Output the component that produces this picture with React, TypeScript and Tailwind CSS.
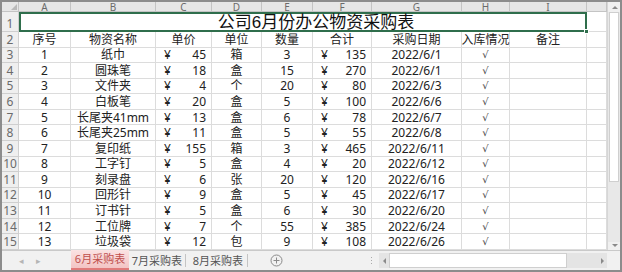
import React from "react";

const colLetters = ["A", "B", "C", "D", "E", "F", "G", "H", "I", ""];

const headers = ["序号", "物资名称", "单价", "单位", "数量", "合计", "采购日期", "入库情况", "备注"];

const rows: [number, string, number, string, number, number, string][] = [
    [1, "纸巾", 45, "箱", 3, 135, "2022/6/1"],
    [2, "圆珠笔", 18, "盒", 15, 270, "2022/6/1"],
    [3, "文件夹", 4, "个", 20, 80, "2022/6/3"],
    [4, "白板笔", 20, "盒", 5, 100, "2022/6/6"],
    [5, "长尾夹41mm", 13, "盒", 6, 78, "2022/6/7"],
    [6, "长尾夹25mm", 11, "盒", 5, 55, "2022/6/8"],
    [7, "复印纸", 155, "箱", 3, 465, "2022/6/11"],
    [8, "工字钉", 5, "盒", 4, 20, "2022/6/12"],
    [9, "刻录盘", 6, "张", 20, 120, "2022/6/16"],
    [10, "回形针", 9, "盒", 5, 45, "2022/6/17"],
    [11, "订书针", 5, "盒", 6, 30, "2022/6/20"],
    [12, "工位牌", 7, "个", 55, 385, "2022/6/24"],
    [13, "垃圾袋", 12, "包", 9, 108, "2022/6/26"],
];

function Cell({ children, className = "" }: { children?: React.ReactNode; className?: string }) {
    return (
        <div className={`flex items-center justify-center border-r border-b border-[#dcdcdc] whitespace-nowrap leading-[13px] ${className}`}>
            {children}
        </div>
    );
}

function RowHead({ n, className = "" }: { n: number; className?: string }) {
    return (
        <div className={`flex items-center justify-center bg-[#efefef] border-r border-b border-[#cfcfcf] text-[12px] leading-[13px] text-[#6b6b6b] ${className}`}>
            {n}
        </div>
    );
}

function Money({ v }: { v: number }) {
    return (
        <Cell className="!justify-between pl-[8px] pr-[5px]">
            <span>¥</span>
            <span>{v}</span>
        </Cell>
    );
}

function Arrow({ dir }: { dir: "up" | "down" | "left" | "right" }) {
    const pts = {
        up: "1,5 4,2 7,5",
        down: "1,2 4,5 7,2",
        left: "5,1 2,4 5,7",
        right: "2,1 5,4 2,7",
    }[dir];
    return (
        <svg width="7" height="7" viewBox="0 0 7 7">
            <polygon points={pts} fill="#8a8a8a" />
        </svg>
    );
}

export default function App() {
    return (
        <div
            className="w-[622px] h-[272px] border-2 border-[#8c8c8c] border-b-[3px] bg-white flex flex-col text-[12px] text-[#222]"
            style={{ fontFamily: '"Noto Sans", "Noto Sans CJK SC", sans-serif' }}
        >
            <div className="flex">
                {/* sheet grid */}
                <div className="grid grid-cols-[17px_52px_85px_56px_50px_51px_59px_90px_48px_77px_20px] grid-rows-[10px_20px_repeat(14,15.57px)]">
                    {/* column header row */}
                    <div className="bg-[#e6e6e6] border-r border-b border-[#c4c4c4] flex items-end justify-end p-[1px]">
                        <svg width="6" height="6" viewBox="0 0 6 6">
                            <polygon points="6,0 6,6 0,6" fill="#b9b9b9" />
                        </svg>
                    </div>
                    {colLetters.map((c, i) => (
                        <div
                            key={i}
                            className="bg-[#e6e6e6] border-r border-b border-[#c4c4c4] flex items-center justify-center text-[10px] leading-[8px] text-[#6b6b6b]"
                        >
                            {c}
                        </div>
                    ))}

                    {/* row 1: title */}
                    <RowHead n={1} className="!items-end pb-[1px]" />
                    <div className="col-span-9 relative border-2 border-[#2f6e4c] flex items-center justify-center pl-[26px] text-[17px] leading-[13px] text-[#111] font-['Liberation_Sans','Noto_Sans_CJK_SC',sans-serif]">
                        公司6月份办公物资采购表
                        <span className="absolute -right-[4px] -bottom-[4px] w-[5px] h-[5px] bg-[#2f6e4c] border border-white" />
                    </div>
                    <Cell />

                    {/* row 2: headers */}
                    <RowHead n={2} />
                    {headers.map((h) => (
                        <Cell key={h}>{h}</Cell>
                    ))}
                    <Cell />

                    {rows.map((r, i) => (
                        <React.Fragment key={r[0]}>
                            <RowHead n={i + 3} />
                            <Cell>{r[0]}</Cell>
                            <Cell>{r[1]}</Cell>
                            <Money v={r[2]} />
                            <Cell>{r[3]}</Cell>
                            <Cell>{r[4]}</Cell>
                            <Money v={r[5]} />
                            <Cell>{r[6]}</Cell>
                            <Cell className="text-[10px] text-[#444] font-['DejaVu_Sans',sans-serif]">√</Cell>
                            <Cell />
                            <Cell />
                        </React.Fragment>
                    ))}
                </div>

                {/* vertical scrollbar */}
                <div className="w-[13px] flex flex-col bg-[#e8e8e8] border-l border-[#d6d6d6]">
                    <div className="h-[10px] flex items-center justify-center bg-[#f0f0f0]">
                        <Arrow dir="up" />
                    </div>
                    <div className="h-[170px] mx-[1px] bg-white border border-[#cfcfcf]" />
                    <div className="flex-1" />
                    <div className="h-[8px] flex items-center justify-center bg-[#f0f0f0]">
                        <Arrow dir="down" />
                    </div>
                </div>
            </div>

            {/* sheet tabs + horizontal scrollbar */}
            <div className="flex-1 flex items-stretch bg-[#f1f1f1] border-t border-[#c9c9c9] leading-[13px] whitespace-nowrap">
                <div className="w-[69px] flex items-center gap-[12px] pl-[17px]">
                    <span className="text-[9px] text-[#b5b5b5]">◂</span>
                    <span className="text-[9px] text-[#b5b5b5]">▸</span>
                </div>
                <div className="w-[58px] flex items-center justify-center bg-gradient-to-b from-[#fbe3e3] to-[#f3c4c4] border-b-2 border-[#e07a7a] text-[11px] text-[#c0504d] -mt-px">
                    6月采购表
                </div>
                <div className="w-[57px] flex items-center justify-end pr-[3px] text-[11px] text-[#555] border-r border-[#c4c4c4] my-[3px]">
                    7月采购表
                </div>
                <div className="w-[62px] flex items-center justify-end pr-[4px] text-[11px] text-[#555] border-r border-[#c4c4c4] my-[3px]">
                    8月采购表
                </div>
                <div className="w-[56px] flex items-center justify-center">
                    <svg width="13" height="13" viewBox="0 0 13 13">
                        <circle cx="6.5" cy="6.5" r="5.5" fill="none" stroke="#8a8a8a" strokeWidth="1" />
                        <path d="M6.5 3.5v6M3.5 6.5h6" stroke="#8a8a8a" strokeWidth="1" />
                    </svg>
                </div>
                <div className="flex-1" />
                <div className="w-[8px] flex flex-col items-center justify-center gap-[2px]">
                    <span className="w-[1px] h-[1px] bg-[#aaa]" />
                    <span className="w-[1px] h-[1px] bg-[#aaa]" />
                    <span className="w-[1px] h-[1px] bg-[#aaa]" />
                </div>
                <div className="w-[228px] flex items-center my-[2px] ml-[4px] mr-[13px] bg-[#e4e4e4]">
                    <div className="w-[10px] flex items-center justify-center">
                        <Arrow dir="left" />
                    </div>
                    <div className="w-[178px] h-full bg-white border border-[#cfcfcf]" />
                    <div className="flex-1" />
                    <div className="w-[10px] flex items-center justify-center">
                        <Arrow dir="right" />
                    </div>
                </div>
            </div>
        </div>
    );
}
